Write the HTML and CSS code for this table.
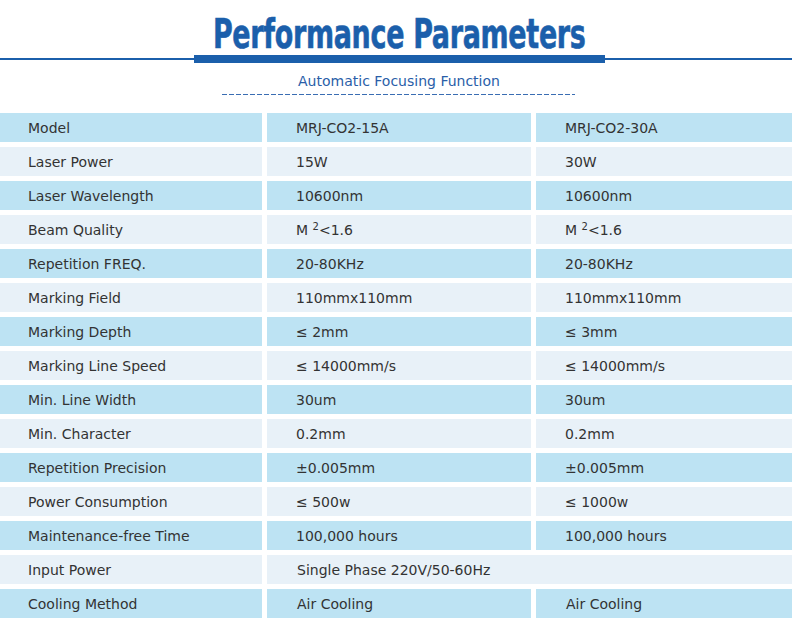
FILE: index.html
```html
<!DOCTYPE html>
<html lang="en">
<head>
<meta charset="utf-8">
<title>Performance Parameters</title>
<link rel="stylesheet" href="styles.css">
</head>
<body>
<header class="head">
  <h1 class="title"><span class="title-text">Performance Parameters</span></h1>
  <div class="rule"><div class="rule-bar"></div></div>
  <p class="sub">Automatic Focusing Function</p>
  <div class="dash"></div>
</header>
<main class="specs">
  <div class="cell dark">Model</div><div class="cell dark v">MRJ-CO2-15A</div><div class="cell dark v">MRJ-CO2-30A</div>
  <div class="cell light">Laser Power</div><div class="cell light v">15W</div><div class="cell light v">30W</div>
  <div class="cell dark">Laser Wavelength</div><div class="cell dark v">10600nm</div><div class="cell dark v">10600nm</div>
  <div class="cell light">Beam Quality</div><div class="cell light v">M <sup>2</sup>&lt;1.6</div><div class="cell light v">M <sup>2</sup>&lt;1.6</div>
  <div class="cell dark">Repetition FREQ.</div><div class="cell dark v">20-80KHz</div><div class="cell dark v">20-80KHz</div>
  <div class="cell light">Marking Field</div><div class="cell light v">110mmx110mm</div><div class="cell light v">110mmx110mm</div>
  <div class="cell dark">Marking Depth</div><div class="cell dark v">≤ 2mm</div><div class="cell dark v">≤ 3mm</div>
  <div class="cell light">Marking Line Speed</div><div class="cell light v">≤ 14000mm/s</div><div class="cell light v">≤ 14000mm/s</div>
  <div class="cell dark">Min. Line Width</div><div class="cell dark v">30um</div><div class="cell dark v">30um</div>
  <div class="cell light">Min. Character</div><div class="cell light v">0.2mm</div><div class="cell light v">0.2mm</div>
  <div class="cell dark">Repetition Precision</div><div class="cell dark v">±0.005mm</div><div class="cell dark v">±0.005mm</div>
  <div class="cell light">Power Consumption</div><div class="cell light v">≤ 500w</div><div class="cell light v">≤ 1000w</div>
  <div class="cell dark">Maintenance-free Time</div><div class="cell dark v">100,000 hours</div><div class="cell dark v">100,000 hours</div>
  <div class="cell light">Input Power</div><div class="cell light v v-wide span2">Single Phase 220V/50-60Hz</div>
  <div class="cell dark">Cooling Method</div><div class="cell dark v v-wide">Air Cooling</div><div class="cell dark v v-wide">Air Cooling</div>
</main>
</body>
</html>
```
FILE: styles.css
```css
html, body {
  margin: 0;
  padding: 0;
  background: #ffffff;
}
body {
  width: 792px;
  height: 626px;
  overflow: hidden;
  font-family: "DejaVu Sans", Verdana, sans-serif;
  color: #333333;
}
.head {
  display: flex;
  flex-direction: column;
  align-items: center;
}
.title {
  margin: 13px 0 1px 6px;
  height: 41px;
  font-size: 41px;
  line-height: 42px;
  font-weight: bold;
  font-family: "DejaVu Sans Condensed", "DejaVu Sans", sans-serif;
  font-stretch: condensed;
  color: #1b5fab;
  white-space: nowrap;
}
.title-text {
  display: inline-block;
  transform: scaleX(0.73);
  transform-origin: center;
  letter-spacing: -0.4px;
  -webkit-text-stroke: 0.6px #1b5fab;
}
.rule {
  width: 100%;
  height: 8px;
  display: flex;
  justify-content: center;
  background: linear-gradient(#1b5fab, #1b5fab) center / 100% 2px no-repeat;
}
.rule-bar {
  width: 411px;
  height: 8px;
  margin-left: 7px;
  background: #1b5fab;
}
.sub {
  margin: 9px 0 0 6px;
  font-size: 14px;
  line-height: 18px;
  color: #2a5ea8;
}
.dash {
  width: 353px;
  height: 1px;
  margin: 4px 0 0 5px;
  background: repeating-linear-gradient(90deg, #3a6db3 0 5px, transparent 5px 7px);
}
.specs {
  margin-top: 18px;
  display: grid;
  grid-template-columns: 262px 264px 262px;
  grid-auto-rows: 29px;
  column-gap: 5px;
  row-gap: 5px;
  width: 800px;
}
.cell {
  font-size: 14px;
  line-height: 31px;
  height: 29px;
  overflow: hidden;
  padding-left: 28px;
  white-space: nowrap;
  color: #333333;
}
.cell.v {
  padding-left: 29px;
}
.cell.v-wide {
  padding-left: 30px;
}
.dark {
  background: #bde3f3;
}
.light {
  background: #e8f1f8;
}
.span2 {
  grid-column: 2 / 4;
}
sup {
  font-size: 10px;
  vertical-align: 5px;
  line-height: 0;
}
```
